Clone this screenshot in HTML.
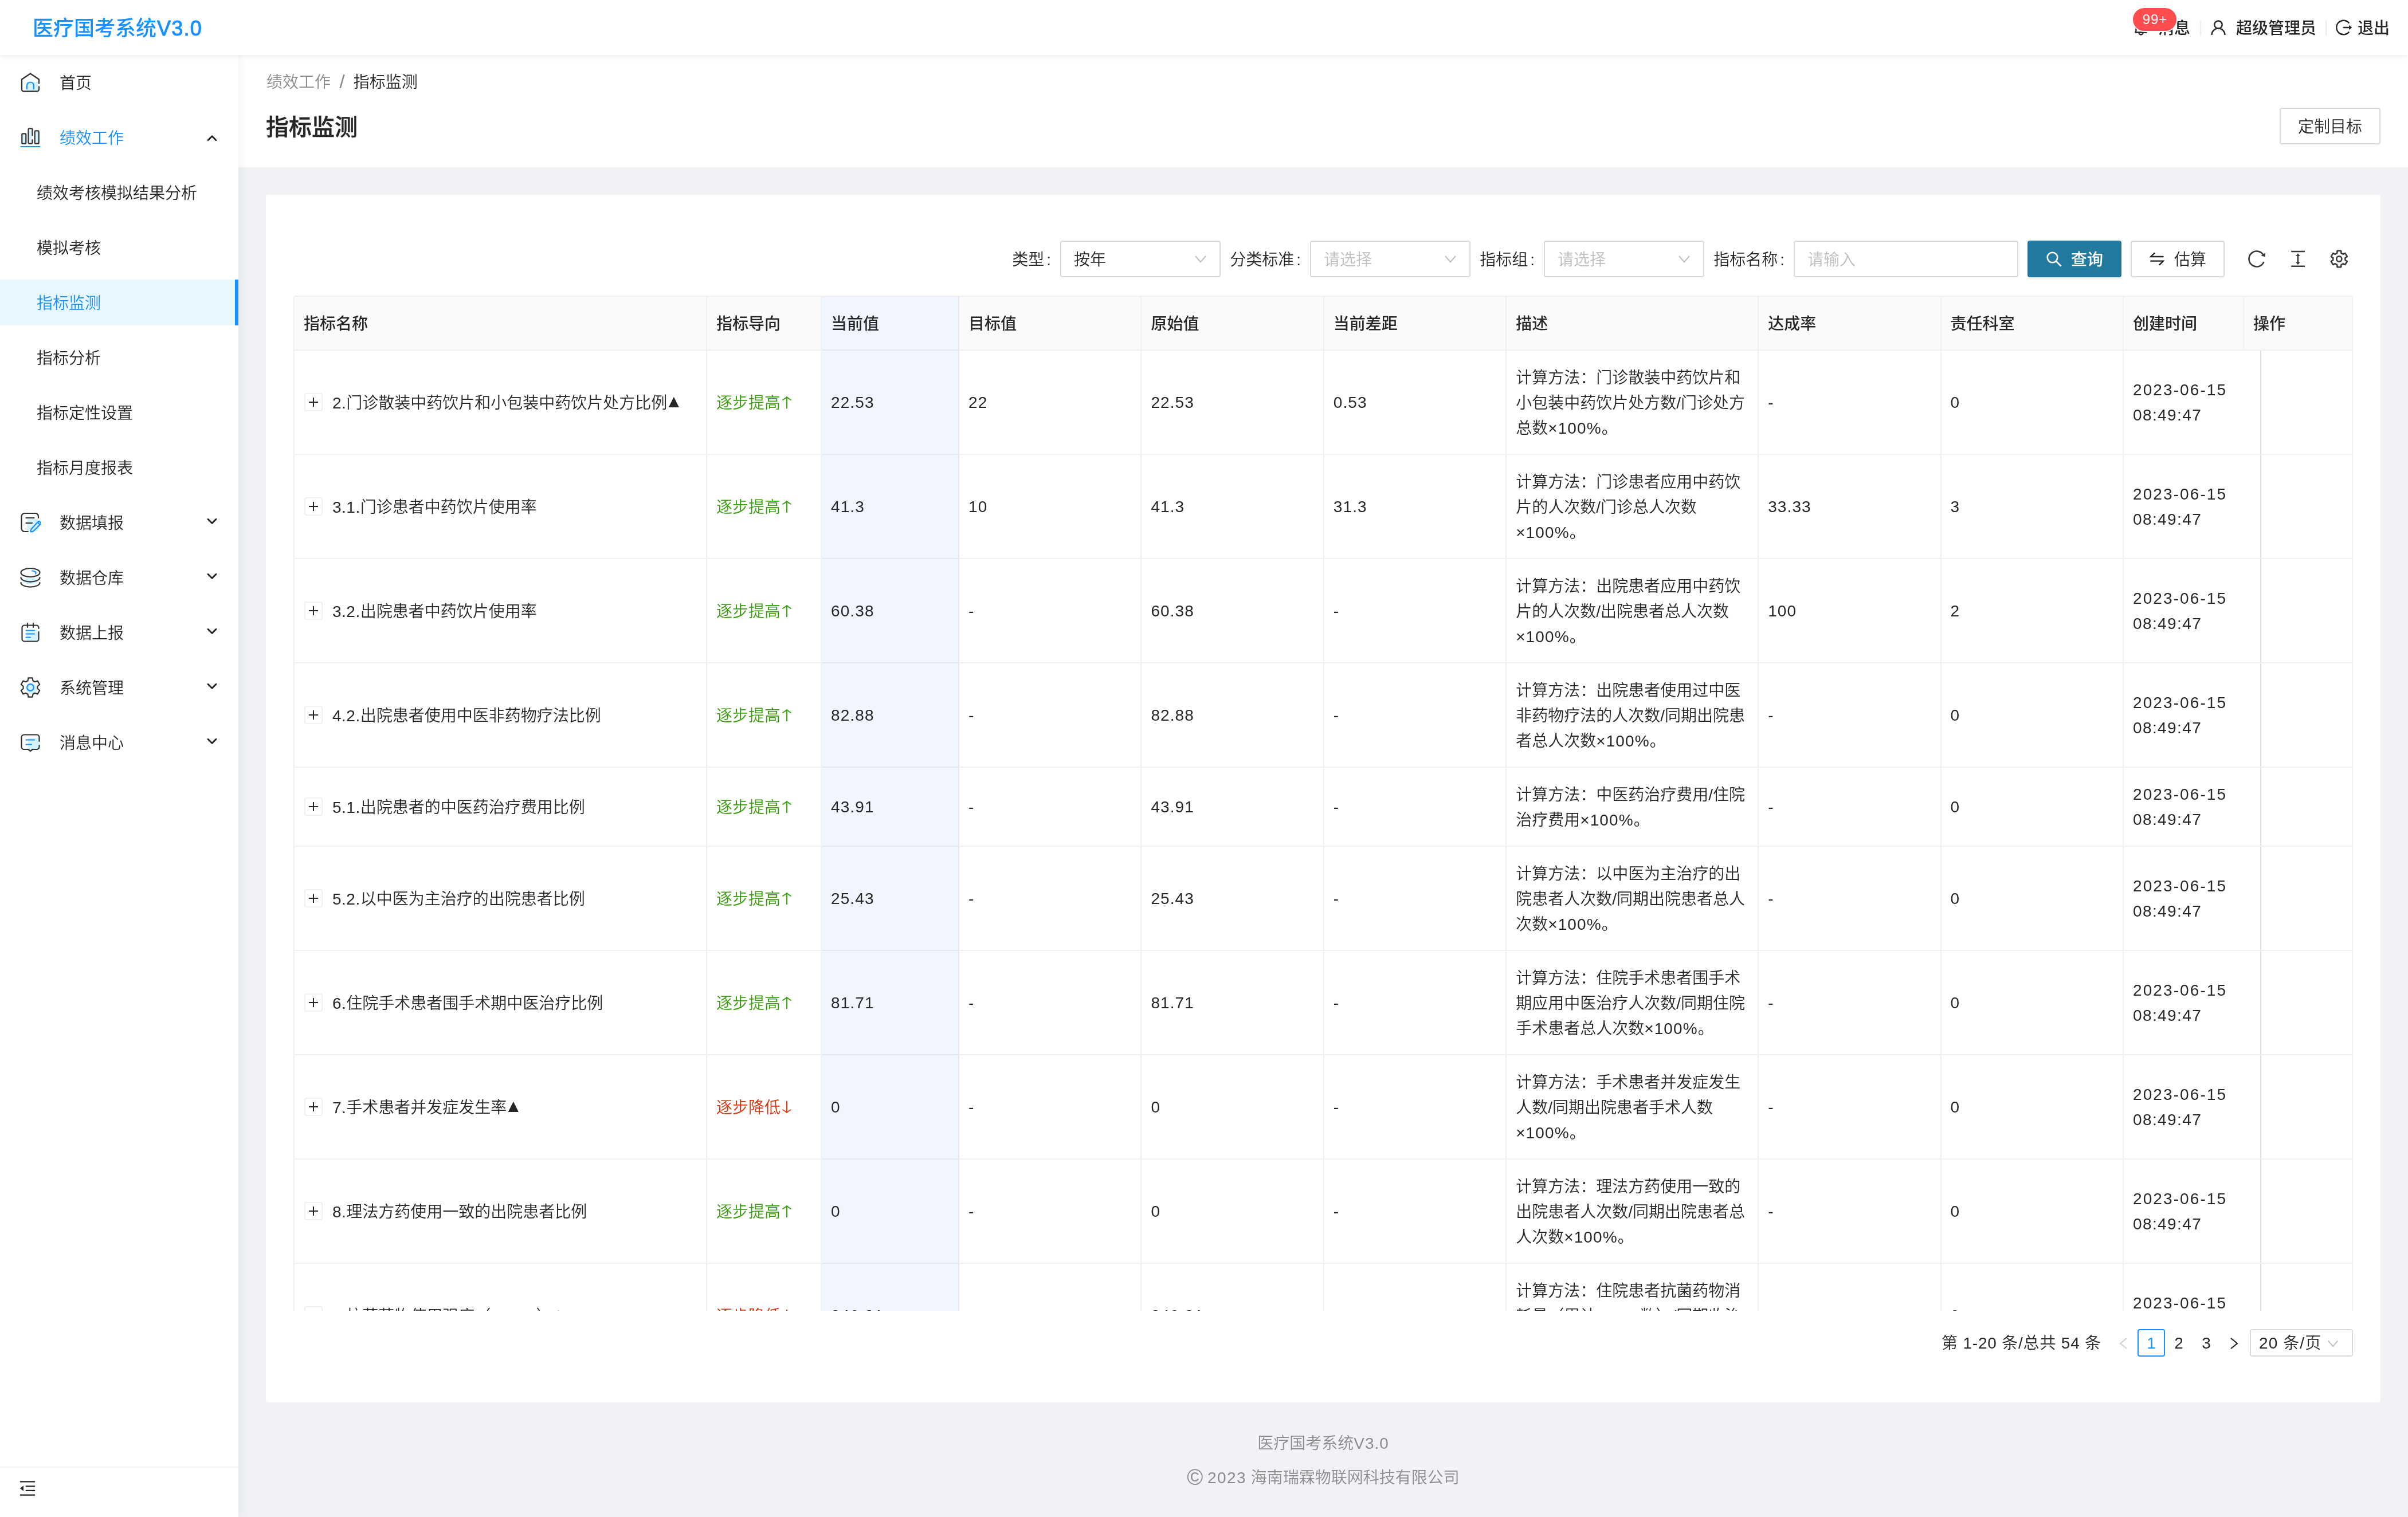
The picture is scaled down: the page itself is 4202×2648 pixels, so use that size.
<!DOCTYPE html>
<html lang="zh-CN">
<head>
<meta charset="utf-8">
<title>医疗国考系统V3.0</title>
<style>
*{box-sizing:border-box;margin:0;padding:0}
html,body{width:4202px;height:2648px;overflow:hidden;background:#f0f2f5}
#root{position:absolute;left:0;top:0;width:4202px;height:2648px;overflow:hidden;will-change:transform}
body{font-weight:350;font-family:"Liberation Sans","Noto Sans CJK SC",sans-serif;font-size:28px;line-height:44px;color:#262626;position:relative;-webkit-font-smoothing:antialiased}
.abs{position:absolute}
#hdr{position:absolute;left:0;top:0;width:4202px;height:96px;background:#fff;box-shadow:0 2px 8px rgba(0,21,41,.08);z-index:10}
#logo{position:absolute;left:57px;top:2px;height:96px;line-height:96px;font-size:36px;font-weight:500;color:#1890ff;white-space:nowrap}
#side{position:absolute;left:0;top:96px;width:416px;height:2552px;background:#fff;box-shadow:4px 0 16px 0 rgba(29,35,41,.05);z-index:5}
.mi{position:absolute;left:0;width:416px;height:80px;line-height:80px;white-space:nowrap}
.mi .t{position:absolute;left:104px;top:2px}
.mi.sub .t{left:64px}
.mi svg.ic{position:absolute;left:35px;top:22px;width:36px;height:36px}
.mi svg.ar{position:absolute;left:358px;top:26px;width:24px;height:24px}
.mi.sel{background:#e6f7ff;color:#1890ff}
.mi.sel:after{content:"";position:absolute;right:0;top:0;width:6px;height:80px;background:#1890ff}
.mi.act{color:#1890ff}
#collapse{position:absolute;left:0;top:2464px;width:416px;height:88px;border-top:2px solid #f0f0f0}
#ph{position:absolute;left:416px;top:96px;width:3786px;height:196px;background:#fff}
#bc{position:absolute;left:49px;top:26px;height:44px;line-height:44px;color:#8c8c8c;white-space:nowrap}
#bc .sep{margin:0 15.200px;color:#8c8c8c;font-size:34px;line-height:0;position:relative;top:1px}
#bc .cur{color:#262626}
#title{position:absolute;left:48px;top:94px;height:64px;line-height:64px;font-size:40px;font-weight:500;-webkit-text-stroke:.400px #262626;color:#262626;white-space:nowrap}
.btn{position:absolute;height:64px;line-height:60px;padding-top:2px;border:2px solid #d9d9d9;border-radius:4px;background:#fff;text-align:center;white-space:nowrap;box-shadow:0 4px 0 rgba(0,0,0,.015)}
#card{position:absolute;left:464px;top:340px;width:3690px;height:2108px;background:#fff;border-radius:4px}
.lbl{position:absolute;top:422px;height:64px;line-height:64px;white-space:nowrap;text-align:right}
.selb{position:absolute;top:420px;height:64px;width:280px;border:2px solid #d9d9d9;border-radius:4px;background:#fff;line-height:60px;padding-left:22px;padding-top:2px;white-space:nowrap}
.selb.ph{color:#bfbfbf}
.selb svg{position:absolute;right:21px;top:18px;width:24px;height:24px}
table{border-collapse:separate;border-spacing:0;table-layout:fixed}
#thead{position:absolute;left:512px;top:516px;width:3594px;height:96px;border-top:2px solid #f0f0f0;border-left:2px solid #f0f0f0;background:#fafafa;overflow:hidden;border-radius:4px 4px 0 0}
#thead table{width:3592px}
#thead th{height:94px;padding:26px 16px 22px;border-right:2px solid #f0f0f0;border-bottom:2px solid #f0f0f0;background:#fafafa;font-weight:500;text-align:left;white-space:nowrap;line-height:44px;color:#262626}
#tbody{position:absolute;left:512px;top:612px;width:3594px;height:1676px;border-left:2px solid #f0f0f0;overflow:hidden}
#tbody table{width:3592px}
#tbody td{padding:26px 16px 22px;border-right:2px solid #f0f0f0;border-bottom:2px solid #f0f0f0;vertical-align:middle;line-height:44px;white-space:nowrap}
#tbody td.hl,#thead th.hl{background:#f0f5ff;border-right-color:#e3e8f2;border-bottom-color:#e3e8f2}
#tbody td.pf{border-right-color:#e2e2e2}
.g{color:#389e0d}.r{color:#d4380d}
.exp{display:inline-block;vertical-align:middle;width:32px;height:32px;border:2px solid #f0f0f0;border-radius:4px;background:#fff;position:relative;margin:-7px 17px 0 1px}
.exp:before{content:"";position:absolute;left:6px;right:6px;top:13px;height:2px;background:#262626}
.exp:after{content:"";position:absolute;top:6px;bottom:6px;left:13px;width:2px;background:#262626}
.n{letter-spacing:1.1px}
.np{letter-spacing:.5px}
#tbody td.n{padding:25px 16px 23px}
.aw{display:inline-block;font-family:"Noto Sans CJK SC",sans-serif;margin:0 -6.500px 0 -3.500px;transform:scale(1.25,.82);line-height:28px}
.tri{font-size:31px;margin-left:-4px;line-height:28px;position:relative;top:-2px}
#pg{position:absolute;top:2321px;left:0;height:48px;line-height:48px;white-space:nowrap}
#pg span,#pg div{position:absolute;top:0;height:48px;line-height:48px;white-space:nowrap}
#foot1,#foot2{position:absolute;left:416px;width:3786px;text-align:center;color:#8c8c8c;height:44px;line-height:44px;white-space:nowrap}
</style>
</head>
<body>
<div id="root">
<div id="hdr">
<div id="logo">医疗国考系统<span style="font-weight:400;letter-spacing:1.2px;margin-left:1px;-webkit-text-stroke:1px #1890ff">V3.0</span></div>
<!-- header right -->
<svg class="abs" style="left:3722px;top:34px;width:28px;height:28px" viewBox="0 0 28 28" fill="none"><path d="M14 2.500 a8.500 8.500 0 0 0 -8.500 8.500 V19 L4.500 22.500 H23.500 L22.500 19 V11 A8.500 8.500 0 0 0 14 2.500 Z M10.500 23 a3.500 3.500 0 0 0 7 0" stroke="#262626" stroke-width="2.400" stroke-linejoin="round"/></svg>
<div class="abs" style="left:3766px;top:28px;height:44px;line-height:44px;font-weight:500;white-space:nowrap">消息</div>
<div class="abs" style="left:3722px;top:14px;width:76px;height:40px;border-radius:20px;background:#ff4d4f;color:#fff;font-size:24px;line-height:40px;text-align:center;box-shadow:0 0 0 2px #fff;white-space:nowrap;letter-spacing:1px;padding-left:1px">99+</div>
<div class="abs" style="left:3839px;top:36px;width:2px;height:26px;background:#ececec"></div>
<svg class="abs" style="left:3857px;top:34px;width:28px;height:28px" viewBox="0 0 28 28" fill="none"><circle cx="14" cy="9.200" r="6.700" stroke="#262626" stroke-width="2.400"/><path d="M2.500 27 a11.500 11.500 0 0 1 23 0" stroke="#262626" stroke-width="2.400"/></svg>
<div class="abs" style="left:3902px;top:28px;height:44px;line-height:44px;font-weight:500;white-space:nowrap">超级管理员</div>
<div class="abs" style="left:4058px;top:36px;width:2px;height:26px;background:#ececec"></div>
<svg class="abs" style="left:4075px;top:34px;width:30px;height:28px" viewBox="0 0 30 28" fill="none"><path d="M24.300 6.500 a12.300 12.300 0 1 0 0 15" stroke="#262626" stroke-width="2.400"/><path d="M13.500 14 H27" stroke="#262626" stroke-width="2.400"/><path d="M24 9.800 L29.200 14 L24 18.200 Z" fill="#262626"/></svg>
<div class="abs" style="left:4114px;top:28px;height:44px;line-height:44px;font-weight:500;white-space:nowrap">退出</div>
</div>

<div id="side">
<div class="mi" style="top:8px"><svg class="ic" viewBox="0 0 36 36" fill="none"><rect x="11" y="17" width="20" height="16" fill="#d3f4fd"/><path d="M18 2.5 L3 12.5 V30 a3.5 3.5 0 0 0 3.500 3.5 H29.500 a3.500 3.500 0 0 0 3.500 -3.500 V25.500 M33 19.500 V12.500 L18 2.500" stroke="#333" stroke-width="2.300" stroke-linejoin="round" stroke-linecap="round"/><path d="M12 29 V23.500 a6 6 0 0 1 12 0 V29" stroke="#1890ff" stroke-width="2.200" stroke-linecap="round"/></svg><span class="t">首页</span></div>
<div class="mi act" style="top:104px"><svg class="ic" viewBox="0 0 36 36" fill="none"><rect x="4" y="13" width="6" height="15" fill="#d3f4fd"/><rect x="15" y="6" width="6" height="22" fill="#d3f4fd"/><rect x="26" y="8" width="6" height="20" fill="#d3f4fd"/><rect x="3.300" y="11.300" width="7" height="17.400" rx="1.500" stroke="#333" stroke-width="2.200"/><path d="M21.500 14.500 V3.800 a1.500 1.500 0 0 0 -1.500 -1.500 H16 a1.500 1.500 0 0 0 -1.500 1.500 V27.200 a1.500 1.500 0 0 0 1.500 1.500 H20 a1.500 1.500 0 0 0 1.500 -1.500 V22" stroke="#333" stroke-width="2.200" stroke-linecap="round"/><rect x="25.700" y="6.300" width="7" height="22.400" rx="1.500" stroke="#333" stroke-width="2.200"/><path d="M1.500 34 H34.500" stroke="#1890ff" stroke-width="2.200" stroke-linecap="round"/></svg><span class="t">绩效工作</span><svg class="ar" viewBox="0 0 24 24" fill="none"><path d="M5 18.700 L12 11.700 L19 18.700" stroke="#1f1f1f" stroke-width="2.800" stroke-linecap="round" stroke-linejoin="round"/></svg></div>
<div class="mi sub" style="top:200px"><span class="t">绩效考核模拟结果分析</span></div>
<div class="mi sub" style="top:296px"><span class="t">模拟考核</span></div>
<div class="mi sub sel" style="top:392px"><span class="t">指标监测</span></div>
<div class="mi sub" style="top:488px"><span class="t">指标分析</span></div>
<div class="mi sub" style="top:584px"><span class="t">指标定性设置</span></div>
<div class="mi sub" style="top:680px"><span class="t">指标月度报表</span></div>
<div class="mi" style="top:776px"><svg class="ic" viewBox="0 0 36 36" fill="none"><rect x="12" y="12" width="21" height="21" rx="4" fill="#d3f4fd"/><path d="M14 34 H8 a5.500 5.500 0 0 1 -5.500 -5.500 V7.500 a5.500 5.500 0 0 1 5.500 -5.500 H26.500 a5.500 5.500 0 0 1 5.500 5.500 V10" stroke="#333" stroke-width="2.200" stroke-linecap="round"/><path d="M10.500 10 H24.500 M10.500 19 H21" stroke="#333" stroke-width="2.200" stroke-linecap="round"/><path d="M30.500 17.500 l4.200 4.200 M31.300 16.800 a2.200 2.200 0 0 1 3.100 0 l1.100 1.100 a2.200 2.200 0 0 1 0 3.100 L24.500 32 c-1.500 1.500 -4.500 2.500 -6 2.300 c-0.300 -1.500 0.800 -4.500 2.300 -6 Z" stroke="#1890ff" stroke-width="2.200" stroke-linejoin="round" stroke-linecap="round"/></svg><span class="t">数据填报</span><svg class="ar" viewBox="0 0 24 24" fill="none"><path d="M5 8.300 L12 15.300 L19 8.300" stroke="#1f1f1f" stroke-width="2.800" stroke-linecap="round" stroke-linejoin="round"/></svg></div>
<div class="mi" style="top:872px"><svg class="ic" viewBox="0 0 36 36" fill="none"><ellipse cx="18" cy="24" rx="13" ry="5.500" fill="#d3f4fd"/><ellipse cx="18" cy="9.500" rx="16.500" ry="7.500" stroke="#333" stroke-width="2.200"/><path d="M1.500 18 c0 4.200 7.400 7.600 16.500 7.600 s16.500 -3.400 16.500 -7.600" stroke="#333" stroke-width="2.200" stroke-linecap="round"/><path d="M1.500 27 c0 4.200 7.400 7.600 16.500 7.600 s16.500 -3.400 16.500 -7.600" stroke="#333" stroke-width="2.200" stroke-linecap="round"/><path d="M21 6.500 c4 0.200 7.500 1.500 6.300 5.200" stroke="#1890ff" stroke-width="2.200" stroke-linecap="round"/></svg><span class="t">数据仓库</span><svg class="ar" viewBox="0 0 24 24" fill="none"><path d="M5 8.300 L12 15.300 L19 8.300" stroke="#1f1f1f" stroke-width="2.800" stroke-linecap="round" stroke-linejoin="round"/></svg></div>
<div class="mi" style="top:968px"><svg class="ic" viewBox="0 0 36 36" fill="none"><rect x="11" y="14" width="20" height="19" fill="#d3f4fd"/><path d="M32.500 17 V29.500 a4 4 0 0 1 -4 4 H7.500 a4 4 0 0 1 -4 -4 V9.500 a4 4 0 0 1 4 -4 H28.500 a4 4 0 0 1 4 4 V11" stroke="#333" stroke-width="2.200" stroke-linecap="round"/><path d="M13 2 V9 M23 2 V9" stroke="#333" stroke-width="2.200" stroke-linecap="round"/><path d="M10.500 14.500 H25 M10.500 20.500 H25 M10.500 26.500 H18" stroke="#1890ff" stroke-width="2.200" stroke-linecap="round"/></svg><span class="t">数据上报</span><svg class="ar" viewBox="0 0 24 24" fill="none"><path d="M5 8.300 L12 15.300 L19 8.300" stroke="#1f1f1f" stroke-width="2.800" stroke-linecap="round" stroke-linejoin="round"/></svg></div>
<div class="mi" style="top:1064px"><svg class="ic" viewBox="0 0 36 36" fill="none"><circle cx="20" cy="20" r="9.500" fill="#d3f4fd"/><path d="M22.52 6.24 L21.53 1.37 L14.47 1.37 L13.48 6.24 L10.07 8.21 L5.37 6.62 L1.83 12.75 L5.56 16.03 L5.56 19.97 L1.83 23.25 L5.37 29.38 L10.07 27.79 L13.48 29.76 L14.47 34.63 L21.53 34.63 L22.52 29.76 L25.93 27.79 L30.63 29.38 L34.17 23.25 L30.44 19.97 L30.44 16.03 L34.17 12.75 L30.63 6.62 L25.93 8.21 Z" stroke="#333" stroke-width="2.200" stroke-linejoin="round"/><circle cx="18" cy="18" r="5.800" stroke="#1890ff" stroke-width="2.200"/></svg><span class="t">系统管理</span><svg class="ar" viewBox="0 0 24 24" fill="none"><path d="M5 8.300 L12 15.300 L19 8.300" stroke="#1f1f1f" stroke-width="2.800" stroke-linecap="round" stroke-linejoin="round"/></svg></div>
<div class="mi" style="top:1160px"><svg class="ic" viewBox="0 0 36 36" fill="none"><path d="M14 10 H34 V30 H21 L18 32.500 L14 30 Z" fill="#d3f4fd"/><path d="M33.500 16 V9 a4.500 4.500 0 0 0 -4.500 -4.500 H7 a4.500 4.500 0 0 0 -4.500 4.500 V25.500 a4.500 4.500 0 0 0 4.500 4.500 H14 L18 33 L22 30 H29 a4.500 4.500 0 0 0 4.500 -4.500 V23" stroke="#333" stroke-width="2.200" stroke-linejoin="round" stroke-linecap="round"/><path d="M10.500 13.500 H25 M10.500 21.500 H20" stroke="#1890ff" stroke-width="2.200" stroke-linecap="round"/></svg><span class="t">消息中心</span><svg class="ar" viewBox="0 0 24 24" fill="none"><path d="M5 8.300 L12 15.300 L19 8.300" stroke="#1f1f1f" stroke-width="2.800" stroke-linecap="round" stroke-linejoin="round"/></svg></div>
<div id="collapse"><svg class="abs" style="left:33px;top:21px;width:30px;height:30px" viewBox="0 0 32 32"><path d="M2 3.500 H30 M12.500 12 H30 M12.500 20 H30 M2 28.500 H30" stroke="#262626" stroke-width="2.400" fill="none"/><path d="M8.500 11 V21 L2 16 Z" fill="#262626"/></svg></div>
</div>

<div id="ph">
<div id="bc">绩效工作<span class="sep">/</span><span class="cur">指标监测</span></div>
<div id="title">指标监测</div>
<div class="btn" style="left:3562px;top:92px;width:176px">定制目标</div>
</div>

<div id="card"></div>

<!-- toolbar -->
<div class="lbl" style="right:2352px">类型<span style="margin:0 16px 0 4px">:</span></div>
<div class="selb" style="left:1850px">按年<svg viewBox="0 0 24 24" fill="none"><path d="M3 7 L12 17.500 L21 7" stroke="#bfbfbf" stroke-width="2"/></svg></div>
<div class="lbl" style="right:1916px">分类标准<span style="margin:0 16px 0 4px">:</span></div>
<div class="selb ph" style="left:2286px">请选择<svg viewBox="0 0 24 24" fill="none"><path d="M3 7 L12 17.500 L21 7" stroke="#bfbfbf" stroke-width="2"/></svg></div>
<div class="lbl" style="right:1508px">指标组<span style="margin:0 16px 0 4px">:</span></div>
<div class="selb ph" style="left:2694px">请选择<svg viewBox="0 0 24 24" fill="none"><path d="M3 7 L12 17.500 L21 7" stroke="#bfbfbf" stroke-width="2"/></svg></div>
<div class="lbl" style="right:1072px">指标名称<span style="margin:0 16px 0 4px">:</span></div>
<div class="selb ph" style="left:3130px;width:392px">请输入</div>
<div class="btn" style="left:3538px;top:420px;width:164px;background:#237a9f;border-color:#237a9f;color:#fff;font-weight:500;text-align:left;padding-left:74px;box-shadow:0 4px 0 rgba(0,0,0,.045)"><svg class="abs" style="left:30px;top:16px;width:28px;height:28px" viewBox="0 0 28 28" fill="none"><circle cx="11.500" cy="11.500" r="8.800" stroke="#fff" stroke-width="2.600"/><path d="M18 18 L26.500 26.500" stroke="#fff" stroke-width="2.600"/></svg>查询</div>
<div class="btn" style="left:3718px;top:420px;width:164px;text-align:left;padding-left:74px"><svg class="abs" style="left:30px;top:16px;width:28px;height:28px" viewBox="0 0 28 28" fill="none"><path d="M25.500 10 H3.200 L10 3.400" stroke="#262626" stroke-width="2.400" stroke-linejoin="miter"/><path d="M2.500 17.600 H24.800 L18 24.600" stroke="#262626" stroke-width="2.400"/></svg>估算</div>
<svg class="abs" style="left:3922px;top:436px;width:32px;height:32px" viewBox="0 0 32 32" fill="none"><path d="M27.450 8.850 A13.500 13.500 0 1 0 28.500 21.060" stroke="#3a3a3a" stroke-width="2.600"/><path d="M30.900 5.200 V12.200 L23.500 10.500 Z" fill="#3a3a3a"/></svg>
<svg class="abs" style="left:3994px;top:436px;width:32px;height:32px" viewBox="0 0 32 32" fill="none"><path d="M4.200 3 H28 M4.200 28.800 H28 M15.900 9 V23" stroke="#3a3a3a" stroke-width="2.600"/><path d="M12 11 L15.900 6.300 L19.800 11 Z M12 21.500 L15.900 26.200 L19.800 21.500 Z" fill="#3a3a3a"/></svg>
<svg class="abs" style="left:4066px;top:436px;width:32px;height:32px" viewBox="0 0 32 32" fill="none"><path d="M19.49 5.85 L19.08 1.77 L12.52 1.77 L12.11 5.85 L8.86 7.73 L5.12 6.04 L1.84 11.73 L5.16 14.12 L5.16 17.88 L1.84 20.27 L5.12 25.96 L8.86 24.27 L12.11 26.15 L12.52 30.23 L19.08 30.23 L19.49 26.15 L22.74 24.27 L26.48 25.96 L29.76 20.27 L26.44 17.88 L26.44 14.12 L29.76 11.73 L26.48 6.04 L22.74 7.73 Z" stroke="#3a3a3a" stroke-width="2.600" stroke-linejoin="round"/><circle cx="15.800" cy="16" r="4.600" stroke="#3a3a3a" stroke-width="2.600"/></svg>

<!-- table -->
<div id="thead"><table><colgroup><col style="width:720px"><col style="width:200px"><col style="width:240px"><col style="width:318.4px"><col style="width:318.4px"><col style="width:318.4px"><col style="width:440px"><col style="width:318.4px"><col style="width:318.4px"><col style="width:210px"><col style="width:190px"></colgroup>
<tr><th>指标名称</th><th>指标导向</th><th class="hl">当前值</th><th>目标值</th><th>原始值</th><th>当前差距</th><th>描述</th><th>达成率</th><th>责任科室</th><th>创建时间</th><th>操作</th></tr>
</table></div>
<div id="tbody"><table><colgroup><col style="width:720px"><col style="width:200px"><col style="width:240px"><col style="width:318.4px"><col style="width:318.4px"><col style="width:318.4px"><col style="width:440px"><col style="width:318.4px"><col style="width:318.4px"><col style="width:240px"><col style="width:160px"></colgroup>
<tr><td><span class="exp"></span><span class="np">2.</span>门诊散装中药饮片和小包装中药饮片处方比例<span class="tri">▲</span></td><td class="g">逐步提高<span class="aw">↑</span></td><td class="hl n">22.53</td><td class="n">22</td><td class="n">22.53</td><td class="n">0.53</td><td>计算方法：门诊散装中药饮片和<br>小包装中药饮片处方数/门诊处方<br>总数<span class=n>×100%</span>。</td><td class="n">-</td><td class="n">0</td><td class="n pf"><span style="letter-spacing:2.100px">2023-06-15</span><br><span style="letter-spacing:1.400px">08:49:47</span></td><td class="fx"></td></tr>
<tr><td><span class="exp"></span><span class="np">3.1.</span>门诊患者中药饮片使用率</td><td class="g">逐步提高<span class="aw">↑</span></td><td class="hl n">41.3</td><td class="n">10</td><td class="n">41.3</td><td class="n">31.3</td><td>计算方法：门诊患者应用中药饮<br>片的人次数/门诊总人次数<br><span class=n>×100%</span>。</td><td class="n">33.33</td><td class="n">3</td><td class="n pf"><span style="letter-spacing:2.100px">2023-06-15</span><br><span style="letter-spacing:1.400px">08:49:47</span></td><td class="fx"></td></tr>
<tr><td><span class="exp"></span><span class="np">3.2.</span>出院患者中药饮片使用率</td><td class="g">逐步提高<span class="aw">↑</span></td><td class="hl n">60.38</td><td class="n">-</td><td class="n">60.38</td><td class="n">-</td><td>计算方法：出院患者应用中药饮<br>片的人次数/出院患者总人次数<br><span class=n>×100%</span>。</td><td class="n">100</td><td class="n">2</td><td class="n pf"><span style="letter-spacing:2.100px">2023-06-15</span><br><span style="letter-spacing:1.400px">08:49:47</span></td><td class="fx"></td></tr>
<tr><td><span class="exp"></span><span class="np">4.2.</span>出院患者使用中医非药物疗法比例</td><td class="g">逐步提高<span class="aw">↑</span></td><td class="hl n">82.88</td><td class="n">-</td><td class="n">82.88</td><td class="n">-</td><td>计算方法：出院患者使用过中医<br>非药物疗法的人次数/同期出院患<br>者总人次数<span class=n>×100%</span>。</td><td class="n">-</td><td class="n">0</td><td class="n pf"><span style="letter-spacing:2.100px">2023-06-15</span><br><span style="letter-spacing:1.400px">08:49:47</span></td><td class="fx"></td></tr>
<tr><td><span class="exp"></span><span class="np">5.1.</span>出院患者的中医药治疗费用比例</td><td class="g">逐步提高<span class="aw">↑</span></td><td class="hl n">43.91</td><td class="n">-</td><td class="n">43.91</td><td class="n">-</td><td>计算方法：中医药治疗费用/住院<br>治疗费用<span class=n>×100%</span>。</td><td class="n">-</td><td class="n">0</td><td class="n pf"><span style="letter-spacing:2.100px">2023-06-15</span><br><span style="letter-spacing:1.400px">08:49:47</span></td><td class="fx"></td></tr>
<tr><td><span class="exp"></span><span class="np">5.2.</span>以中医为主治疗的出院患者比例</td><td class="g">逐步提高<span class="aw">↑</span></td><td class="hl n">25.43</td><td class="n">-</td><td class="n">25.43</td><td class="n">-</td><td>计算方法：以中医为主治疗的出<br>院患者人次数/同期出院患者总人<br>次数<span class=n>×100%</span>。</td><td class="n">-</td><td class="n">0</td><td class="n pf"><span style="letter-spacing:2.100px">2023-06-15</span><br><span style="letter-spacing:1.400px">08:49:47</span></td><td class="fx"></td></tr>
<tr><td><span class="exp"></span><span class="np">6.</span>住院手术患者围手术期中医治疗比例</td><td class="g">逐步提高<span class="aw">↑</span></td><td class="hl n">81.71</td><td class="n">-</td><td class="n">81.71</td><td class="n">-</td><td>计算方法：住院手术患者围手术<br>期应用中医治疗人次数/同期住院<br>手术患者总人次数<span class=n>×100%</span>。</td><td class="n">-</td><td class="n">0</td><td class="n pf"><span style="letter-spacing:2.100px">2023-06-15</span><br><span style="letter-spacing:1.400px">08:49:47</span></td><td class="fx"></td></tr>
<tr><td><span class="exp"></span><span class="np">7.</span>手术患者并发症发生率<span class="tri">▲</span></td><td class="r">逐步降低<span class="aw">↓</span></td><td class="hl n">0</td><td class="n">-</td><td class="n">0</td><td class="n">-</td><td>计算方法：手术患者并发症发生<br>人数/同期出院患者手术人数<br><span class=n>×100%</span>。</td><td class="n">-</td><td class="n">0</td><td class="n pf"><span style="letter-spacing:2.100px">2023-06-15</span><br><span style="letter-spacing:1.400px">08:49:47</span></td><td class="fx"></td></tr>
<tr><td><span class="exp"></span><span class="np">8.</span>理法方药使用一致的出院患者比例</td><td class="g">逐步提高<span class="aw">↑</span></td><td class="hl n">0</td><td class="n">-</td><td class="n">0</td><td class="n">-</td><td>计算方法：理法方药使用一致的<br>出院患者人次数/同期出院患者总<br>人次数<span class=n>×100%</span>。</td><td class="n">-</td><td class="n">0</td><td class="n pf"><span style="letter-spacing:2.100px">2023-06-15</span><br><span style="letter-spacing:1.400px">08:49:47</span></td><td class="fx"></td></tr>
<tr><td><span class="exp"></span><span class="np">9.</span>抗菌药物使用强度（<span class="n">DDDs</span>）<span class="tri">▲</span></td><td class="r">逐步降低<span class="aw">↓</span></td><td class="hl n">240.31</td><td class="n">-</td><td class="n">240.31</td><td class="n">-</td><td>计算方法：住院患者抗菌药物消<br>耗量（累计 DDD 数）/同期收治<br>患者人天数×100。</td><td class="n">-</td><td class="n">0</td><td class="n pf"><span style="letter-spacing:2.100px">2023-06-15</span><br><span style="letter-spacing:1.400px">08:49:47</span></td><td class="fx"></td></tr>
</table></div>

<!-- pagination -->
<div id="pg">
<span class="n" style="left:3388px;letter-spacing:.8px">第 1-20 条/总共 54 条</span>
<svg class="abs" style="left:3694px;top:12px;width:24px;height:24px" viewBox="0 0 24 24" fill="none"><path d="M17 3 L6 12 L17 21" stroke="#d0d0d0" stroke-width="2.200"/></svg>
<div style="left:3730px;top:-1px;width:48px;border:2px solid #1890ff;border-radius:4px;line-height:46px;text-align:center;color:#1890ff">1</div>
<div style="left:3778px;width:48px;text-align:center">2</div>
<div style="left:3826px;width:48px;text-align:center">3</div>
<svg class="abs" style="left:3886px;top:12px;width:24px;height:24px" viewBox="0 0 24 24" fill="none"><path d="M7 3 L18 12 L7 21" stroke="#262626" stroke-width="2.200"/></svg>
<div class="n" style="left:3926px;top:-1px;width:180px;border:2px solid #d9d9d9;border-radius:4px;line-height:46px;padding-left:14px">20 条/页<svg class="abs" style="right:22px;top:12px;width:22px;height:22px" viewBox="0 0 24 24" fill="none"><path d="M3 7 L12 17.500 L21 7" stroke="#bfbfbf" stroke-width="2.200"/></svg></div>
</div>

<div id="foot1" style="top:2498px">医疗国考系统<span style="letter-spacing:1px">V3.0</span></div>
<div id="foot2" style="top:2558px"><span style="font-size:38px;line-height:0;position:relative;top:3px;font-weight:400">©</span> <span style="letter-spacing:1.400px">2023</span> 海南瑞霖物联网科技有限公司</div>
</div>
</body>
</html>
